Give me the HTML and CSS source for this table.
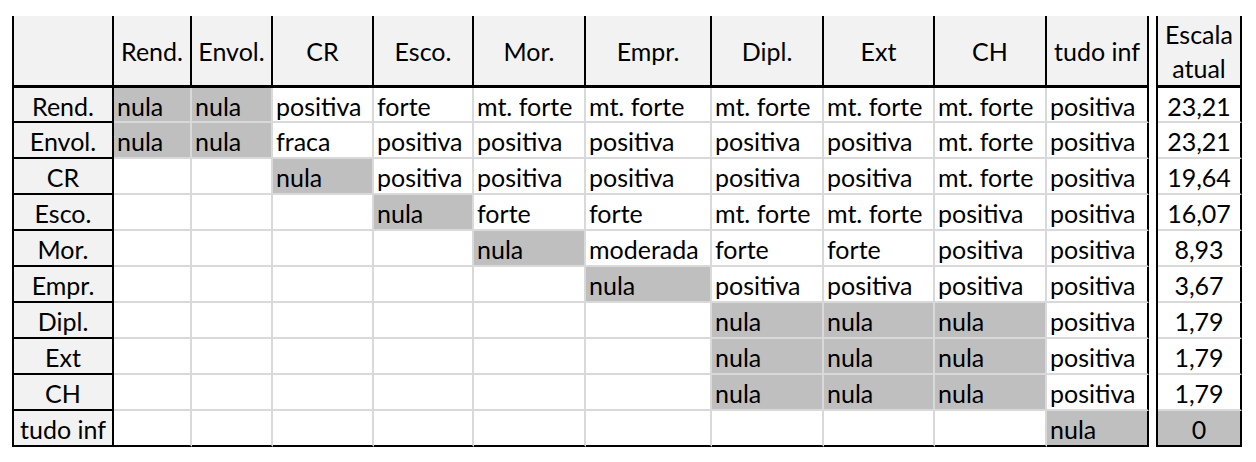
FILE: index.html
```html
<!DOCTYPE html>
<html lang="pt">
<head>
<meta charset="utf-8">
<title>Escala</title>
<link rel="stylesheet" href="styles.css">
</head>
<body>
<div class="page">
<table class="matrix">
  <thead>
    <tr class="head-row">
      <th class="corner w0"></th>
      <th class="w1">Rend.</th>
      <th class="w2">Envol.</th>
      <th class="w3">CR</th>
      <th class="w4">Esco.</th>
      <th class="w5">Mor.</th>
      <th class="w6">Empr.</th>
      <th class="w7">Dipl.</th>
      <th class="w8">Ext</th>
      <th class="w9">CH</th>
      <th class="w10 last-col">tudo inf</th>
      <th class="spacer w11"></th>
      <th class="w12 scale">Escala<br>atual</th>
    </tr>
  </thead>
  <tbody>
    <tr class="r-first">
      <th class="rh">Rend.</th>
      <td class="nula">nula</td><td class="nula">nula</td><td>positiva</td><td>forte</td><td>mt. forte</td><td>mt. forte</td><td>mt. forte</td><td>mt. forte</td><td>mt. forte</td><td class="last-col">positiva</td>
      <td class="spacer"></td><td class="scale">23,21</td>
    </tr>
    <tr>
      <th class="rh">Envol.</th>
      <td class="nula">nula</td><td class="nula">nula</td><td>fraca</td><td>positiva</td><td>positiva</td><td>positiva</td><td>positiva</td><td>positiva</td><td>mt. forte</td><td class="last-col">positiva</td>
      <td class="spacer"></td><td class="scale">23,21</td>
    </tr>
    <tr>
      <th class="rh">CR</th>
      <td></td><td></td><td class="nula">nula</td><td>positiva</td><td>positiva</td><td>positiva</td><td>positiva</td><td>positiva</td><td>mt. forte</td><td class="last-col">positiva</td>
      <td class="spacer"></td><td class="scale">19,64</td>
    </tr>
    <tr>
      <th class="rh">Esco.</th>
      <td></td><td></td><td></td><td class="nula">nula</td><td>forte</td><td>forte</td><td>mt. forte</td><td>mt. forte</td><td>positiva</td><td class="last-col">positiva</td>
      <td class="spacer"></td><td class="scale">16,07</td>
    </tr>
    <tr>
      <th class="rh">Mor.</th>
      <td></td><td></td><td></td><td></td><td class="nula">nula</td><td>moderada</td><td>forte</td><td>forte</td><td>positiva</td><td class="last-col">positiva</td>
      <td class="spacer"></td><td class="scale">8,93</td>
    </tr>
    <tr>
      <th class="rh">Empr.</th>
      <td></td><td></td><td></td><td></td><td></td><td class="nula">nula</td><td>positiva</td><td>positiva</td><td>positiva</td><td class="last-col">positiva</td>
      <td class="spacer"></td><td class="scale">3,67</td>
    </tr>
    <tr>
      <th class="rh">Dipl.</th>
      <td></td><td></td><td></td><td></td><td></td><td></td><td class="nula">nula</td><td class="nula">nula</td><td class="nula">nula</td><td class="last-col">positiva</td>
      <td class="spacer"></td><td class="scale">1,79</td>
    </tr>
    <tr>
      <th class="rh">Ext</th>
      <td></td><td></td><td></td><td></td><td></td><td></td><td class="nula">nula</td><td class="nula">nula</td><td class="nula">nula</td><td class="last-col">positiva</td>
      <td class="spacer"></td><td class="scale">1,79</td>
    </tr>
    <tr>
      <th class="rh">CH</th>
      <td></td><td></td><td></td><td></td><td></td><td></td><td class="nula">nula</td><td class="nula">nula</td><td class="nula">nula</td><td class="last-col">positiva</td>
      <td class="spacer"></td><td class="scale">1,79</td>
    </tr>
    <tr class="r-last">
      <th class="rh">tudo inf</th>
      <td></td><td></td><td></td><td></td><td></td><td></td><td></td><td></td><td></td><td class="last-col nula">nula</td>
      <td class="spacer"></td><td class="scale nula">0</td>
    </tr>
  </tbody>
</table>
</div>
</body>
</html>
```

FILE: styles.css
```css
html, body {
  margin: 0;
  padding: 0;
  background: #ffffff;
}

.page {
  padding: 16px 0 0 12px;
}

.matrix {
  table-layout: fixed;
  border-collapse: separate;
  border-spacing: 0;
  width: 1230px;
  border-left: 2px solid #000;
  font-family: "Lato", "Liberation Sans", sans-serif;
  font-size: 25px;
  color: #000;
}

.matrix th,
.matrix td {
  box-sizing: border-box;
  padding: 0 0 0 3px;
  white-space: nowrap;
  overflow: hidden;
  font-weight: normal;
  vertical-align: middle;
  line-height: 1.2;
}

.matrix td {
  height: 36px;
  padding-top: 2px;
  text-align: left;
  border-right: 2px solid #d9d9d9;
  border-bottom: 2px solid #d9d9d9;
  background: #fff;
}

.matrix .r-first td,
.matrix .r-first th { height: 35px; }

.head-row th {
  height: 72px;
  background: #f2f2f2;
  text-align: center;
  padding: 0;
  border-right: 2px solid #000;
  border-bottom: 3px solid #000;
}

.matrix .rh {
  background: #f2f2f2;
  text-align: center;
  padding: 2px 0 0 0;
  border-right: 2px solid #000;
  border-bottom: 2px solid #000;
}

.matrix td.nula { background: #bfbfbf; }

.matrix .last-col { border-right: 2px solid #000; }

.matrix .r-last td { border-bottom: 2px solid #000; }

.matrix .spacer,
.head-row .spacer,
.matrix .r-last .spacer {
  background: #fff;
  border-bottom: 0;
  border-right: 2px solid #000;
  padding: 0;
}

.matrix td.scale {
  text-align: center;
  padding: 2px 0 0 0;
  border-right: 2px solid #000;
}

.head-row .scale { line-height: 34px; }

.w0 { width: 100px; }
.w1 { width: 78px; }
.w2 { width: 81px; }
.w3 { width: 101px; }
.w4 { width: 100px; }
.w5 { width: 112px; }
.w6 { width: 126px; }
.w7 { width: 112px; }
.w8 { width: 111px; }
.w9 { width: 112px; }
.w10 { width: 102px; }
.w11 { width: 9px; }
.w12 { width: 84px; }
```
